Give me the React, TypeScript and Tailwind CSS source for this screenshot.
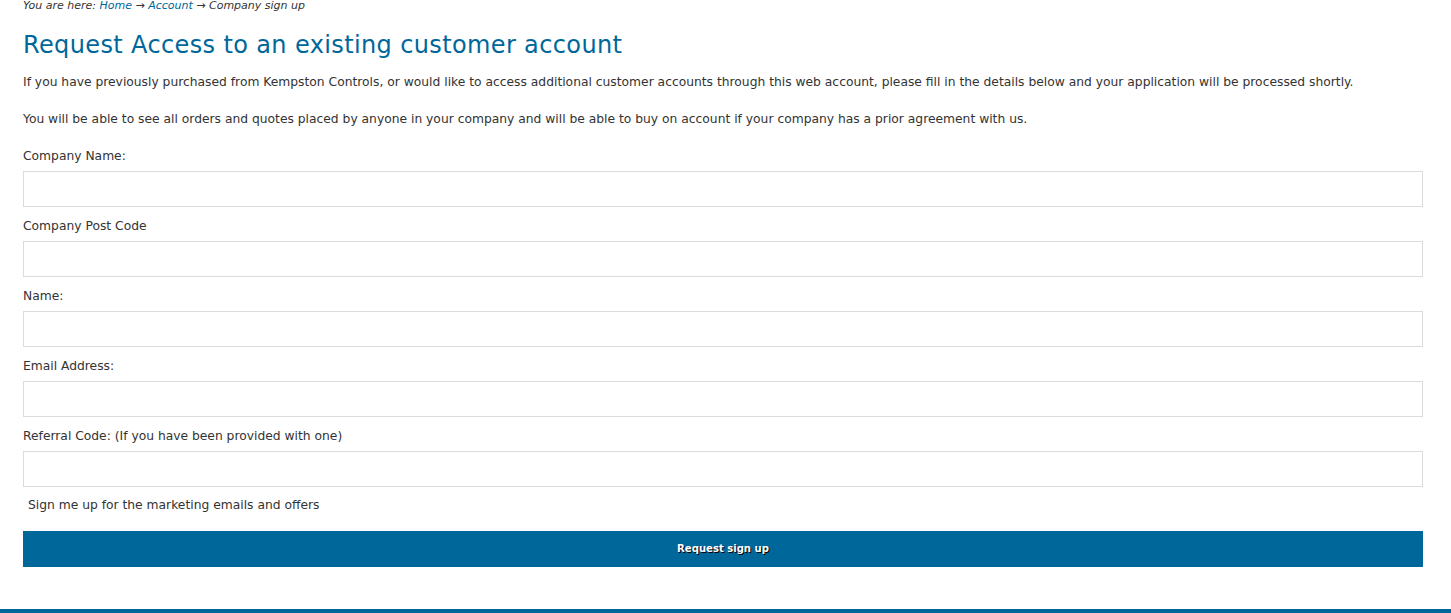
import React from 'react';

const fields = [
  'Company Name:',
  'Company Post Code',
  'Name:',
  'Email Address:',
  'Referral Code: (If you have been provided with one)',
];

export default function App() {
  return (
    <div className="min-h-[613px] bg-white flex flex-col text-[#333] font-['DejaVu_Sans',sans-serif]">
      <div className="px-[23px] w-[1423px] flex-1">
        <div className="text-[11px] italic leading-[14px] -mt-[1px] text-[#333]">
          You are here: <a className="text-[#00679a]">Home</a> → <a className="text-[#00679a]">Account</a> → Company sign up
        </div>
        <h1 className="text-[24px] leading-[30px] mt-[17px] tracking-[0.37px] text-[#00679a] font-normal">
          Request Access to an existing customer account
        </h1>
        <p className="text-[12.3px] leading-[18px] mt-[13px]">
          If you have previously purchased from Kempston Controls, or would like to access additional customer accounts through this web account, please fill in the details below and your application will be processed shortly.
        </p>
        <p className="text-[12.3px] leading-[18px] mt-[19px]">
          You will be able to see all orders and quotes placed by anyone in your company and will be able to buy on account if your company has a prior agreement with us.
        </p>
        <form className="mt-[19px] flex flex-col">
          {fields.map(f => (
            <div key={f} className="flex flex-col h-[70px]">
              <label className="text-[12.3px] leading-[18px]">{f}</label>
              <input className="mt-[6px] h-[36px] w-[1400px] border border-[#dcdce0] bg-white outline-none" />
            </div>
          ))}
          <div className="text-[12.3px] leading-[18px] pl-[5px] -mt-[1px]">Sign me up for the marketing emails and offers</div>
          <button type="button" className="mt-[17px] h-[36px] w-[1400px] bg-[#00679a] text-white text-[11.2px] font-bold font-['DejaVu_Sans_Condensed','Liberation_Sans',sans-serif] [text-shadow:1px_1px_0_#000]">
            Request sign up
          </button>
        </form>
      </div>
      <div className="h-[4px] bg-[#00679a] mt-auto" />
    </div>
  );
}
